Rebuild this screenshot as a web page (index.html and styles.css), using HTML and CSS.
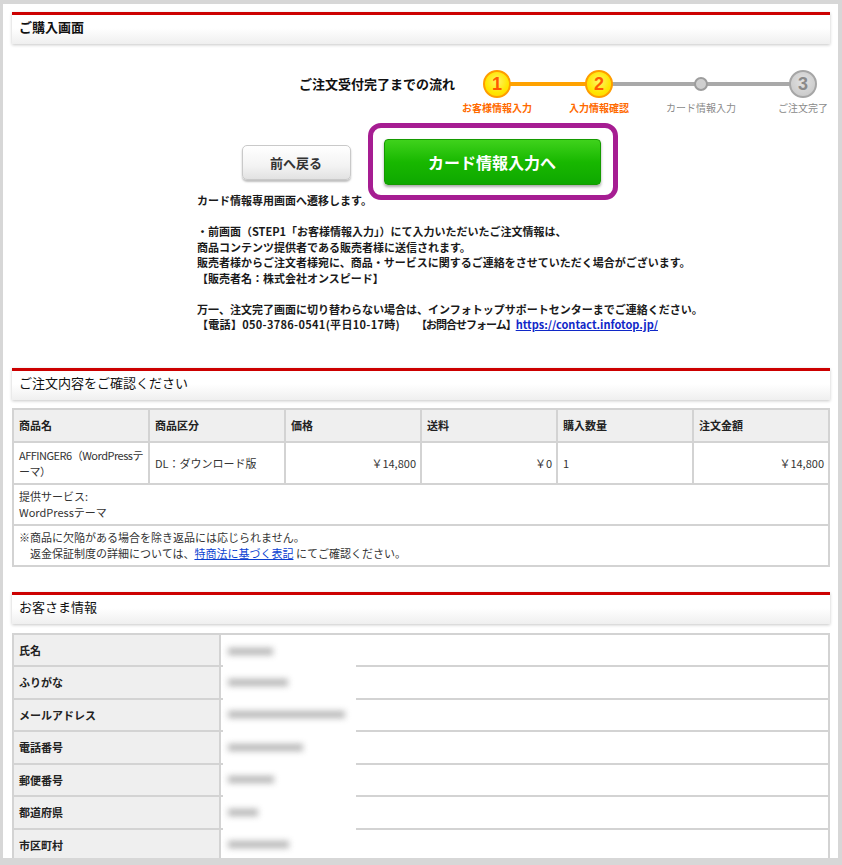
FILE: index.html
```html
<!DOCTYPE html>
<html lang="ja">
<head>
<meta charset="utf-8">
<title>ご購入画面</title>
<link rel="stylesheet" href="styles.css">
</head>
<body>
<div class="page">
  <div class="sec-head"><h2 class="sec-title strong">ご購入画面</h2></div>

  <div class="flow">
    <div class="flow-title">ご注文受付完了までの流れ</div>
    <ol class="steps">
      <li class="step done"><span class="circle">1</span><span class="step-label">お客様情報入力</span></li>
      <li class="step done current"><span class="circle">2</span><span class="step-label">入力情報確認</span></li>
      <li class="step todo"><span class="dot"></span><span class="step-label">カード情報入力</span></li>
      <li class="step todo last"><span class="circle gray">3</span><span class="step-label">ご注文完了</span></li>
    </ol>
  </div>

  <div class="actions">
    <button class="btn-back" type="button">前へ戻る</button>
    <span class="next-wrap">
      <button class="btn-next" type="button">カード情報入力へ</button>
      <span class="highlight"></span>
    </span>
  </div>

  <div class="notice">
    <p>カード情報専用画面へ遷移します。</p>
    <p class="gap">・前画面（STEP1「お客様情報入力」）にて入力いただいたご注文情報は、<br>商品コンテンツ提供者である販売者様に送信されます。<br>販売者様からご注文者様宛に、商品・サービスに関するご連絡をさせていただく場合がございます。<br>【販売者名：株式会社オンスピード】</p>
    <p class="gap">万一、注文完了画面に切り替わらない場合は、インフォトップサポートセンターまでご連絡ください。<br><span class="ascii">【電話】050-3786-0541(平日10-17時)</span><span class="sp"></span><span class="tight">【お問合せフォーム】</span><a class="link" href="#">https://contact.infotop.jp/</a></p>
  </div>

  <div class="sec-head sec2"><h2 class="sec-title">ご注文内容をご確認ください</h2></div>

  <table class="order">
    <thead>
      <tr><th>商品名</th><th>商品区分</th><th>価格</th><th>送料</th><th>購入数量</th><th>注文金額</th></tr>
    </thead>
    <tbody>
      <tr class="item">
        <td class="pname">AFFINGER6（WordPressテーマ）</td>
        <td>DL：ダウンロード版</td>
        <td class="num">￥14,800</td>
        <td class="num">￥0</td>
        <td>1</td>
        <td class="num">￥14,800</td>
      </tr>
      <tr class="note"><td colspan="6">提供サービス:<br>WordPressテーマ</td></tr>
      <tr class="note"><td colspan="6">※商品に欠陥がある場合を除き返品には応じられません。<br>　返金保証制度の詳細については、<a class="tlink" href="#">特商法に基づく表記</a> にてご確認ください。</td></tr>
    </tbody>
  </table>

  <div class="sec-head sec3"><h2 class="sec-title">お客さま情報</h2></div>

  <table class="info">
    <tbody>
      <tr class="first"><th>氏名</th><td><span class="redact"><span class="blur" style="width:45px"></span></span></td></tr>
      <tr><th>ふりがな</th><td><span class="redact"><span class="blur" style="width:60px"></span></span></td></tr>
      <tr><th>メールアドレス</th><td><span class="redact"><span class="blur" style="width:117px"></span></span></td></tr>
      <tr><th>電話番号</th><td><span class="redact"><span class="blur" style="width:75px"></span></span></td></tr>
      <tr><th>郵便番号</th><td><span class="redact"><span class="blur" style="width:46px"></span></span></td></tr>
      <tr><th>都道府県</th><td><span class="redact"><span class="blur" style="width:30px"></span></span></td></tr>
      <tr><th>市区町村</th><td><span class="redact"><span class="blur" style="width:61px"></span></span></td></tr>
    </tbody>
  </table>
</div>
</body>
</html>
```

FILE: styles.css
```css
html, body {
  margin: 0;
  padding: 0;
}
body {
  background: #d7d7d7;
  font-family: "Noto Sans CJK JP", "Noto Sans", sans-serif;
  color: #222;
  height: 865px;
  overflow: hidden;
}
.page {
  margin: 4px 0 0 3px;
  width: 835px;
  height: 854px;
  box-sizing: border-box;
  padding: 8px 8px 0 9px;
  background: #fff;
  overflow: hidden;
}

/* section header */
.sec-head {
  height: 32px;
  box-sizing: border-box;
  border-top: 3px solid #cc0000;
  background: linear-gradient(#ffffff 45%, #efefef);
  box-shadow: 0 1px 3px rgba(0, 0, 0, 0.22);
  padding: 0 7px;
}
.sec-title {
  margin: 0;
  font-size: 13px;
  line-height: 24px;
  font-weight: normal;
  color: #111;
}
.sec-title.strong {
  font-weight: bold;
}
.sec2 { margin-top: 35px; }
.sec3 { margin-top: 25px; }

/* flow steps */
.flow {
  display: flex;
  justify-content: flex-end;
  align-items: flex-start;
  margin-top: 26px;
  overflow: hidden;
}
.flow-title {
  font-size: 13px;
  font-weight: bold;
  line-height: 28px;
  color: #111;
  margin-right: -9px;
  position: relative;
  z-index: 2;
}
.steps {
  display: flex;
  list-style: none;
  margin: 0 -24px 0 0;
  padding: 0;
}
.step {
  width: 102px;
  display: flex;
  flex-direction: column;
  align-items: center;
  position: relative;
}
.step::after {
  content: "";
  position: absolute;
  left: 51px;
  width: 102px;
  top: 12px;
  height: 4px;
  background: #a9a9a9;
  z-index: 0;
}
.step.done::after { background: #ffa200; }
.step.current::after { background: #a9a9a9; }
.step.last::after { display: none; }
.circle {
  width: 28px;
  height: 28px;
  box-sizing: border-box;
  border-radius: 50%;
  border: 2px solid #ff9d00;
  background: radial-gradient(circle at 50% 40%, #fff566, #ffe600 60%, #ffd200);
  color: #ff5a00;
  font-weight: bold;
  font-size: 18px;
  line-height: 24px;
  text-align: center;
  position: relative;
  z-index: 1;
  font-family: "Liberation Sans", Arial, sans-serif;
}
.circle.gray {
  border-color: #a6a6a6;
  background: radial-gradient(circle at 50% 40%, #e2e2e2, #c4c4c4);
  color: #8a8a8a;
}
.dot {
  width: 14px;
  height: 14px;
  box-sizing: border-box;
  margin: 7px 0;
  border-radius: 50%;
  border: 2px solid #9d9d9d;
  background: #cfcfcf;
  position: relative;
  z-index: 1;
}
.step-label {
  margin-top: 4px;
  font-size: 10px;
  line-height: 12px;
  color: #8a8a8a;
  white-space: nowrap;
}
.step.done .step-label {
  color: #ff6a00;
  font-weight: bold;
}

/* buttons */
.actions {
  display: flex;
  justify-content: center;
  align-items: center;
  gap: 33px;
  margin-top: 25px;
}
.btn-back {
  width: 109px;
  height: 35px;
  border: 1px solid #c9c9c9;
  border-radius: 5px;
  background: linear-gradient(#ffffff, #f3f3f3 60%, #e2e2e2);
  box-shadow: 0 2px 2px rgba(0, 0, 0, 0.25);
  font-family: inherit;
  font-size: 13px;
  font-weight: bold;
  color: #333;
  padding: 0;
}
.next-wrap {
  position: relative;
  display: block;
}
.btn-next {
  display: block;
  width: 217px;
  height: 46px;
  border: 1px solid #159a00;
  border-radius: 4px;
  background: linear-gradient(#3fd21c, #18b800 50%, #0ea800);
  box-shadow: 0 2px 3px rgba(0, 0, 0, 0.35);
  font-family: inherit;
  font-size: 16px;
  font-weight: bold;
  color: #fff;
  padding: 0;
}
.highlight {
  position: absolute;
  left: -16px;
  right: -17px;
  top: -16px;
  bottom: -15px;
  border: 5px solid #a61d92;
  border-radius: 13px;
  pointer-events: none;
}

/* notice */
.notice {
  margin: 8px 0 0 185px;
  font-size: 11px;
  line-height: 15.5px;
  font-weight: bold;
  color: #1a1a1a;
}
.notice p {
  margin: 0;
}
.notice p.gap {
  margin-top: 15.5px;
}
.notice .ascii {
  letter-spacing: 0.3px;
}
.notice .tight {
  letter-spacing: -1px;
}
.notice .sp {
  display: inline-block;
  width: 16px;
}
.link {
  color: #1028c8;
  text-decoration: underline;
}

/* order table */
.order {
  margin-top: 8px;
  width: 818px;
  table-layout: fixed;
  border-collapse: collapse;
  font-size: 11px;
  color: #333;
}
.order th, .order td {
  border: 2px solid #d3d3d3;
  padding: 0 4px 0 5px;
  text-align: left;
  vertical-align: middle;
}
.order th {
  background: #efefef;
  height: 31px;
  font-weight: bold;
  color: #222;
}
.order .item td {
  height: 40px;
  line-height: 16px;
}
.order .item td.pname {
  letter-spacing: -0.5px;
  padding-right: 1px;
}
.order .note td {
  height: 39px;
  line-height: 16px;
}
.order .num {
  text-align: right;
}
.tlink {
  color: #0b3fd1;
  text-decoration: underline;
}

/* info table */
.info {
  margin-top: 9px;
  width: 818px;
  table-layout: fixed;
  border-collapse: collapse;
  font-size: 11px;
}
.info th, .info td {
  border: 2px solid #d3d3d3;
  height: 30.5px;
  padding: 0 5px;
  text-align: left;
  vertical-align: middle;
}
.info th {
  width: 195px;
  background: #efefef;
  font-weight: bold;
  color: #222;
}
.info td {
  position: relative;
  background: #fff;
}
.redact {
  position: absolute;
  left: 2px;
  top: -2px;
  bottom: -2px;
  width: 133px;
  background: #fff;
  display: flex;
  align-items: center;
  padding-left: 5px;
  box-sizing: border-box;
}
.info tr.first .redact {
  top: 1px;
}
.blur {
  display: block;
  height: 7px;
  background: #a8a8a8;
  filter: blur(3px);
  opacity: 0.85;
}
```
